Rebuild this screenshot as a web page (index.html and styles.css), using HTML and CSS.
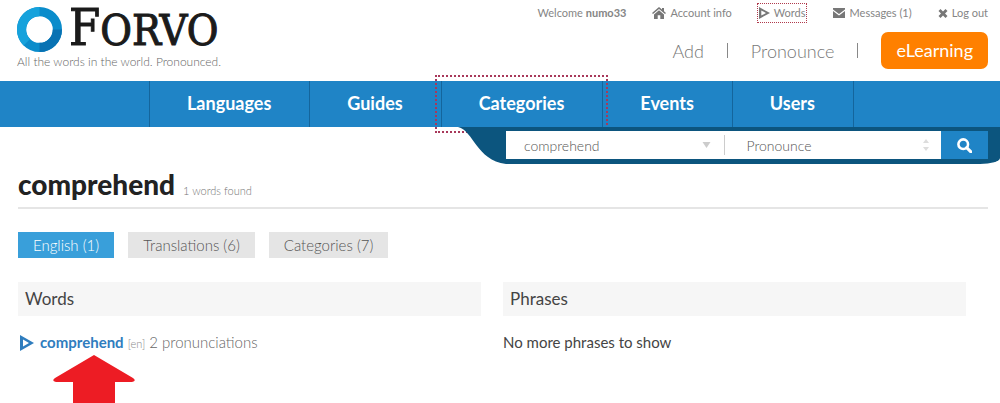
FILE: index.html
```html
<!DOCTYPE html>
<html lang="en">
<head>
  <meta charset="UTF-8">
  <meta name="viewport" content="width=device-width, initial-scale=1.0">
  <title>comprehend - Forvo</title>
  <link rel="stylesheet" href="styles.css">
</head>
<body>
  <header class="header">
    <a class="logo" href="#">
      <span class="logo-mark">
        <svg class="logo-ring" viewBox="0 0 44 44" aria-hidden="true">
          <circle cx="22" cy="22" r="17.5" fill="none" stroke="#0a8ccb" stroke-width="9"/>
          <path d="M9.6 34.4A17.5 17.5 0 0 1 22 4.5" fill="none" stroke="#16a2dc" stroke-width="9"/>
          <path d="M39.5 22A17.5 17.5 0 0 1 22 39.5" fill="none" stroke="#0872b3" stroke-width="9"/>
        </svg>
        <span class="logo-name"><span class="logo-initial">F</span>ORVO</span>
      </span>
      <span class="tagline">All the words in the world. Pronounced.</span>
    </a>
    <div class="header-right">
      <ul class="user-menu">
        <li>Welcome <strong>numo33</strong></li>
        <li>
          <a href="#">
            <svg class="icon" viewBox="0 0 14 12" aria-hidden="true"><path d="M7 0L0 6l1 1 6-5 6 5 1-1-2-1.800V1h-2v1.500zM2 7.500L7 3.300l5 4.200V12H8.300V8.300H5.700V12H2z"/></svg>
            Account info
          </a>
        </li>
        <li>
          <a class="focused" href="#">
            <svg class="icon icon-play" viewBox="0 0 12 12" aria-hidden="true"><path fill-rule="evenodd" d="M1 0l11 6L1 12zM3.300 3.500v5L8 6z"/></svg>
            Words
          </a>
        </li>
        <li>
          <a href="#">
            <svg class="icon" viewBox="0 0 14 12" aria-hidden="true"><path d="M1 1h12v1.500L7 7 1 2.500zM1 4l6 4.500L13 4v7H1z"/></svg>
            Messages (1)
          </a>
        </li>
        <li>
          <a href="#">
            <svg class="icon icon-close" viewBox="0 0 10 12" aria-hidden="true"><path d="M2.500 2L5 4.500 7.500 2 9.500 4 7 6.500 9.500 9l-2 2L5 8.500 2.500 11l-2-2L3 6.500.500 4z"/></svg>
            Log out
          </a>
        </li>
      </ul>
      <div class="actions">
        <a href="#">Add</a>
        <span class="separator"></span>
        <a href="#">Pronounce</a>
        <span class="separator"></span>
        <a class="elearning" href="#">eLearning</a>
      </div>
    </div>
  </header>

  <nav class="nav">
    <a href="#">Languages</a>
    <a href="#">Guides</a>
    <a class="current" href="#">Categories</a>
    <a href="#">Events</a>
    <a href="#">Users</a>
  </nav>

  <form class="search">
    <svg class="search-curve" viewBox="0 0 48 37" aria-hidden="true"><path d="M0 0C16 4 18 33 48 37V0z" fill="#0c557e"/></svg>
    <div class="search-body">
      <div class="search-word">
        <input type="text" value="comprehend" aria-label="Search for a word">
        <svg class="caret" viewBox="0 0 8 6" aria-hidden="true"><path d="M0 0h8L4 6z"/></svg>
      </div>
      <div class="search-type">
        <select aria-label="Search type">
          <option>Pronounce</option>
          <option>Translate</option>
        </select>
        <svg class="updown" viewBox="0 0 6 12" aria-hidden="true"><path d="M3 0l3 4H0zM0 8h6l-3 4z"/></svg>
      </div>
      <button type="submit" aria-label="Search">
        <svg viewBox="0 0 14 14" aria-hidden="true"><circle cx="5.800" cy="5.800" r="4.500" fill="none" stroke="#fff" stroke-width="2.400"/><path d="M9 9l4 4" stroke="#fff" stroke-width="2.800" stroke-linecap="round"/></svg>
      </button>
    </div>
  </form>

  <main class="content">
    <div class="title">
      <h1>comprehend</h1>
      <span>1 words found</span>
    </div>
    <div class="tabs">
      <a class="active" href="#">English (1)</a>
      <a href="#">Translations (6)</a>
      <a href="#">Categories (7)</a>
    </div>
    <div class="results">
      <section>
        <h2>Words</h2>
        <p class="word">
          <svg class="word-play" viewBox="0 0 14 16" aria-hidden="true"><path fill-rule="evenodd" d="M0 0l14 8L0 16zM3 4.500v7L9 8z"/></svg>
          <a href="#">comprehend</a>
          <small>[en]</small>
          <span>2 pronunciations</span>
        </p>
        <svg class="arrow" viewBox="0 0 82 49" aria-hidden="true"><path d="M41 0L80 23q4 3-1 4H62v22H20V27H3q-5-1-1-4z" fill="#ed1c24"/></svg>
      </section>
      <section>
        <h2>Phrases</h2>
        <p>No more phrases to show</p>
      </section>
    </div>
  </main>
</body>
</html>
```

FILE: styles.css
```css
* {
  box-sizing: border-box;
}
body {
  margin: 0;
  background: #fff;
  color: #444;
  font-family: Lato, "Open Sans", sans-serif;
  font-size: 15px;
}
a {
  color: inherit;
  text-decoration: none;
}
svg {
  display: block;
  flex: none;
}
.header {
  display: flex;
  justify-content: space-between;
  height: 81px;
  padding: 4px 12px 0 17px;
}
.logo {
  display: flex;
  flex-direction: column;
}
.logo-mark {
  display: flex;
  align-items: center;
  gap: 7px;
  height: 50px;
}
.logo-ring {
  width: 45px;
  height: 45px;
}
.logo-name {
  color: #1b1b1b;
  font-family: "DejaVu Serif Condensed", "DejaVu Serif", serif;
  font-size: 43px;
  line-height: 50px;
  -webkit-text-stroke: 1px #1b1b1b;
}
.logo-initial {
  font-size: 50px;
}
.tagline {
  color: #666;
  font-size: 12px;
  font-weight: 300;
  line-height: 16px;
}
.header-right {
  display: flex;
  flex-direction: column;
  align-items: flex-end;
}
.user-menu {
  display: flex;
  gap: 26px;
  margin: 0;
  padding: 0;
  list-style: none;
  color: #858585;
  font-size: 11px;
  line-height: 18px;
}
.user-menu a {
  display: flex;
  align-items: center;
  gap: 4px;
}
.user-menu .focused {
  outline: 1px dotted #b03a4c;
}
.icon {
  width: 14px;
  height: 12px;
  fill: #777;
}
.icon-play {
  width: 12px;
}
.icon-close {
  width: 10px;
}
.actions {
  display: flex;
  align-items: center;
  margin-top: 10px;
  color: #777;
  font-size: 18px;
  font-weight: 300;
}
.separator {
  width: 1px;
  height: 15px;
  margin: 0 23px;
  background: #888;
}
.actions .elearning {
  padding: 0 15px;
  border-radius: 7px;
  background: #ff8000;
  color: #fff;
  font-weight: 400;
  line-height: 37px;
}
.nav {
  display: flex;
  height: 46px;
  padding-left: 149px;
  background: #1f84c6;
}
.nav a {
  padding: 0 38px 0 37px;
  border-left: 1px solid #14659c;
  color: #fff;
  font-size: 18px;
  font-weight: 700;
  line-height: 44px;
}
.nav a:last-child {
  border-right: 1px solid #14659c;
}
.nav .current {
  outline: 2px dotted #a8385a;
  outline-offset: 4px;
}
.search {
  position: relative;
  z-index: 1;
  display: flex;
  height: 37px;
  margin-left: 458px;
}
.search-curve {
  width: 48px;
  height: 37px;
}
.search-body {
  display: flex;
  flex: 1;
  padding: 4px 12px 5px 0;
  border-bottom-right-radius: 20px 6px;
  background: #0c557e;
}
.search-word,
.search-type {
  display: flex;
  flex: 1;
  align-items: center;
  background: #fff;
}
.search input,
.search select {
  flex: 1;
  min-width: 0;
  height: 20px;
  padding: 0;
  border: 0;
  background: none;
  color: #555;
  font: 300 14px Lato, sans-serif;
  appearance: none;
}
.search input {
  padding-left: 18px;
}
.search select {
  padding-left: 22px;
  border-left: 1px solid #ccc;
}
.caret {
  width: 9px;
  height: 6px;
  margin-right: 13px;
  fill: #ccc;
}
.updown {
  width: 6px;
  height: 12px;
  margin-right: 12px;
  fill: #ddd;
}
.search button {
  display: flex;
  align-items: center;
  justify-content: center;
  width: 47px;
  padding: 0;
  border: 0;
  background: #1f84c6;
}
.search button svg {
  width: 15px;
  height: 15px;
}
.content {
  padding: 0 12px 0 18px;
}
.title {
  display: flex;
  align-items: baseline;
  gap: 8px;
  height: 45px;
  border-bottom: 2px solid #e5e5e5;
}
.title h1 {
  margin: 0;
  color: #222;
  font-size: 28px;
  font-weight: 900;
  line-height: 40px;
}
.title span {
  color: #777;
  font-size: 11px;
  font-weight: 300;
}
.tabs {
  display: flex;
  gap: 14px;
  margin-top: 23px;
}
.tabs a {
  padding: 0 15px;
  background: #e5e5e5;
  color: #555;
  font-size: 15px;
  font-weight: 300;
  line-height: 26px;
}
.tabs .active {
  background: #399fda;
  color: #fff;
}
.results {
  display: grid;
  grid-template-columns: 1fr 1fr;
  gap: 22px;
  margin-top: 24px;
  padding-right: 22px;
}
.results h2 {
  margin: 0;
  padding: 0 7px;
  background: #f6f6f6;
  color: #444;
  font-size: 17px;
  font-weight: 400;
  line-height: 34px;
}
.results p {
  margin: 16px 0 0;
  font-size: 15px;
  line-height: 20px;
}
.results .word {
  display: flex;
  align-items: baseline;
  gap: 4px;
  padding-left: 2px;
  color: #666;
  font-weight: 300;
}
.word a {
  color: #2f7dbe;
  font-weight: 700;
}
.word small {
  color: #888;
  font-size: 11px;
}
.word-play {
  width: 14px;
  height: 16px;
  margin-right: 2px;
  align-self: center;
  fill: #2f7dbe;
}
.arrow {
  width: 82px;
  height: 49px;
  margin: 1px 0 0 35px;
}
```
